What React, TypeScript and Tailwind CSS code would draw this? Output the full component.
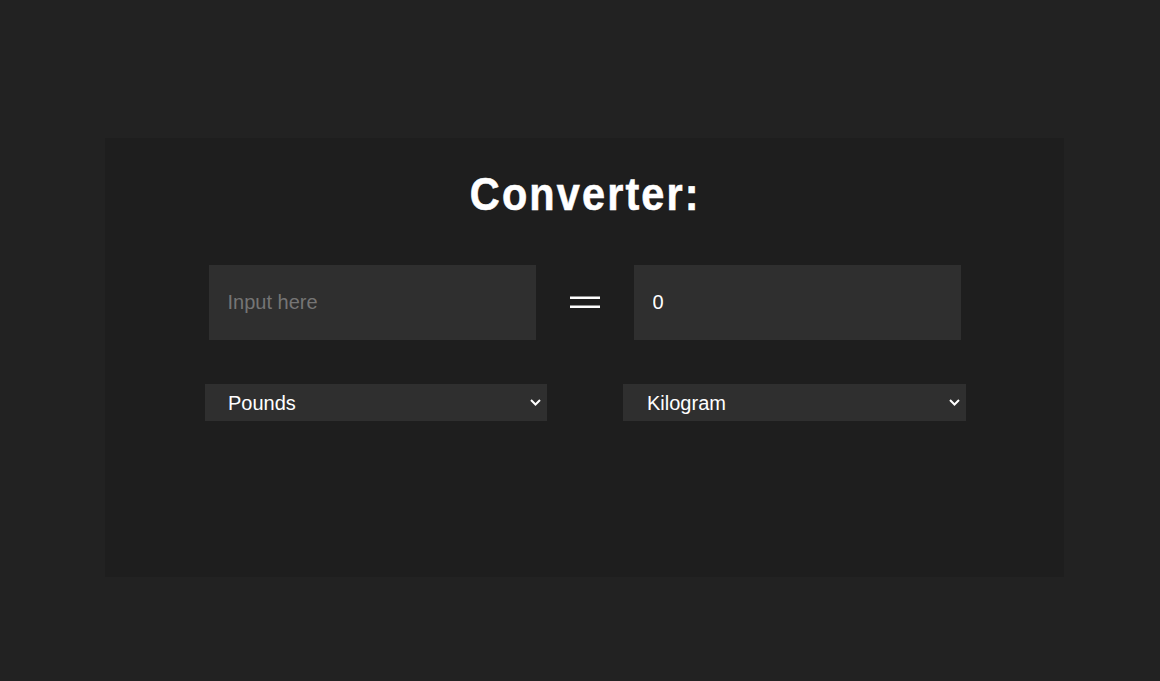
import React, { useState } from "react";

function Chevron() {
  return (
    <svg
      width="11"
      height="7"
      viewBox="0 0 11 7"
      className="pointer-events-none absolute right-[6px] top-[15px]"
    >
      <path d="M1 1 L5.5 5.5 L10 1" fill="none" stroke="#ffffff" strokeWidth="2" />
    </svg>
  );
}

export default function App() {
  const [val, setVal] = useState("");
  const [from, setFrom] = useState("Pounds");
  const [to, setTo] = useState("Kilogram");
  return (
    <div
      className="min-h-[681px] w-full bg-[#222222] pt-[138px] pl-[105px]"
      style={{ fontFamily: '"Liberation Sans", Arial, sans-serif' }}
    >
      <div className="flex h-[439px] w-[959px] flex-col items-center bg-[#1e1e1e] pt-[33px]">
        <h1 className="ml-[2px] scale-x-[0.9] text-[46px] font-bold leading-none tracking-[2.4px] text-white [-webkit-text-stroke:0.6px_#ffffff]">
          Converter:
        </h1>
        <div className="mt-[48px] flex items-center gap-[34px]">
          <input
            autoFocus
            value={val}
            onChange={(e) => setVal(e.target.value)}
            placeholder="Input here"
            className="h-[75px] w-[327px] bg-[#2f2f2f] pl-[19px] text-[20px] text-white caret-white outline-none placeholder:text-[#757575]"
          />
          <svg width="30" height="13" viewBox="0 0 30 13" className="block">
            <rect x="0" y="0.5" width="30" height="2.5" fill="#ffffff" />
            <rect x="0" y="9.5" width="30" height="2.5" fill="#ffffff" />
          </svg>
          <input
            readOnly
            value="0"
            className="h-[75px] w-[327px] bg-[#2f2f2f] pl-[19px] text-[20px] text-white outline-none"
          />
        </div>
        <div className="ml-[2px] mt-[44px] flex items-center gap-[76px]">
          <div className="relative">
            <select
              value={from}
              onChange={(e) => setFrom(e.target.value)}
              className="block h-[37px] w-[342px] appearance-none bg-[#2f2f2f] pl-[23px] pr-[24px] text-[20px] text-white outline-none"
            >
              <option>Pounds</option>
              <option>Kilogram</option>
              <option>Gram</option>
              <option>Ounces</option>
            </select>
            <Chevron />
          </div>
          <div className="relative">
            <select
              value={to}
              onChange={(e) => setTo(e.target.value)}
              className="block h-[37px] w-[343px] appearance-none bg-[#2f2f2f] pl-[24px] pr-[24px] text-[20px] text-white outline-none"
            >
              <option>Pounds</option>
              <option>Kilogram</option>
              <option>Gram</option>
              <option>Ounces</option>
            </select>
            <Chevron />
          </div>
        </div>
      </div>
    </div>
  );
}
